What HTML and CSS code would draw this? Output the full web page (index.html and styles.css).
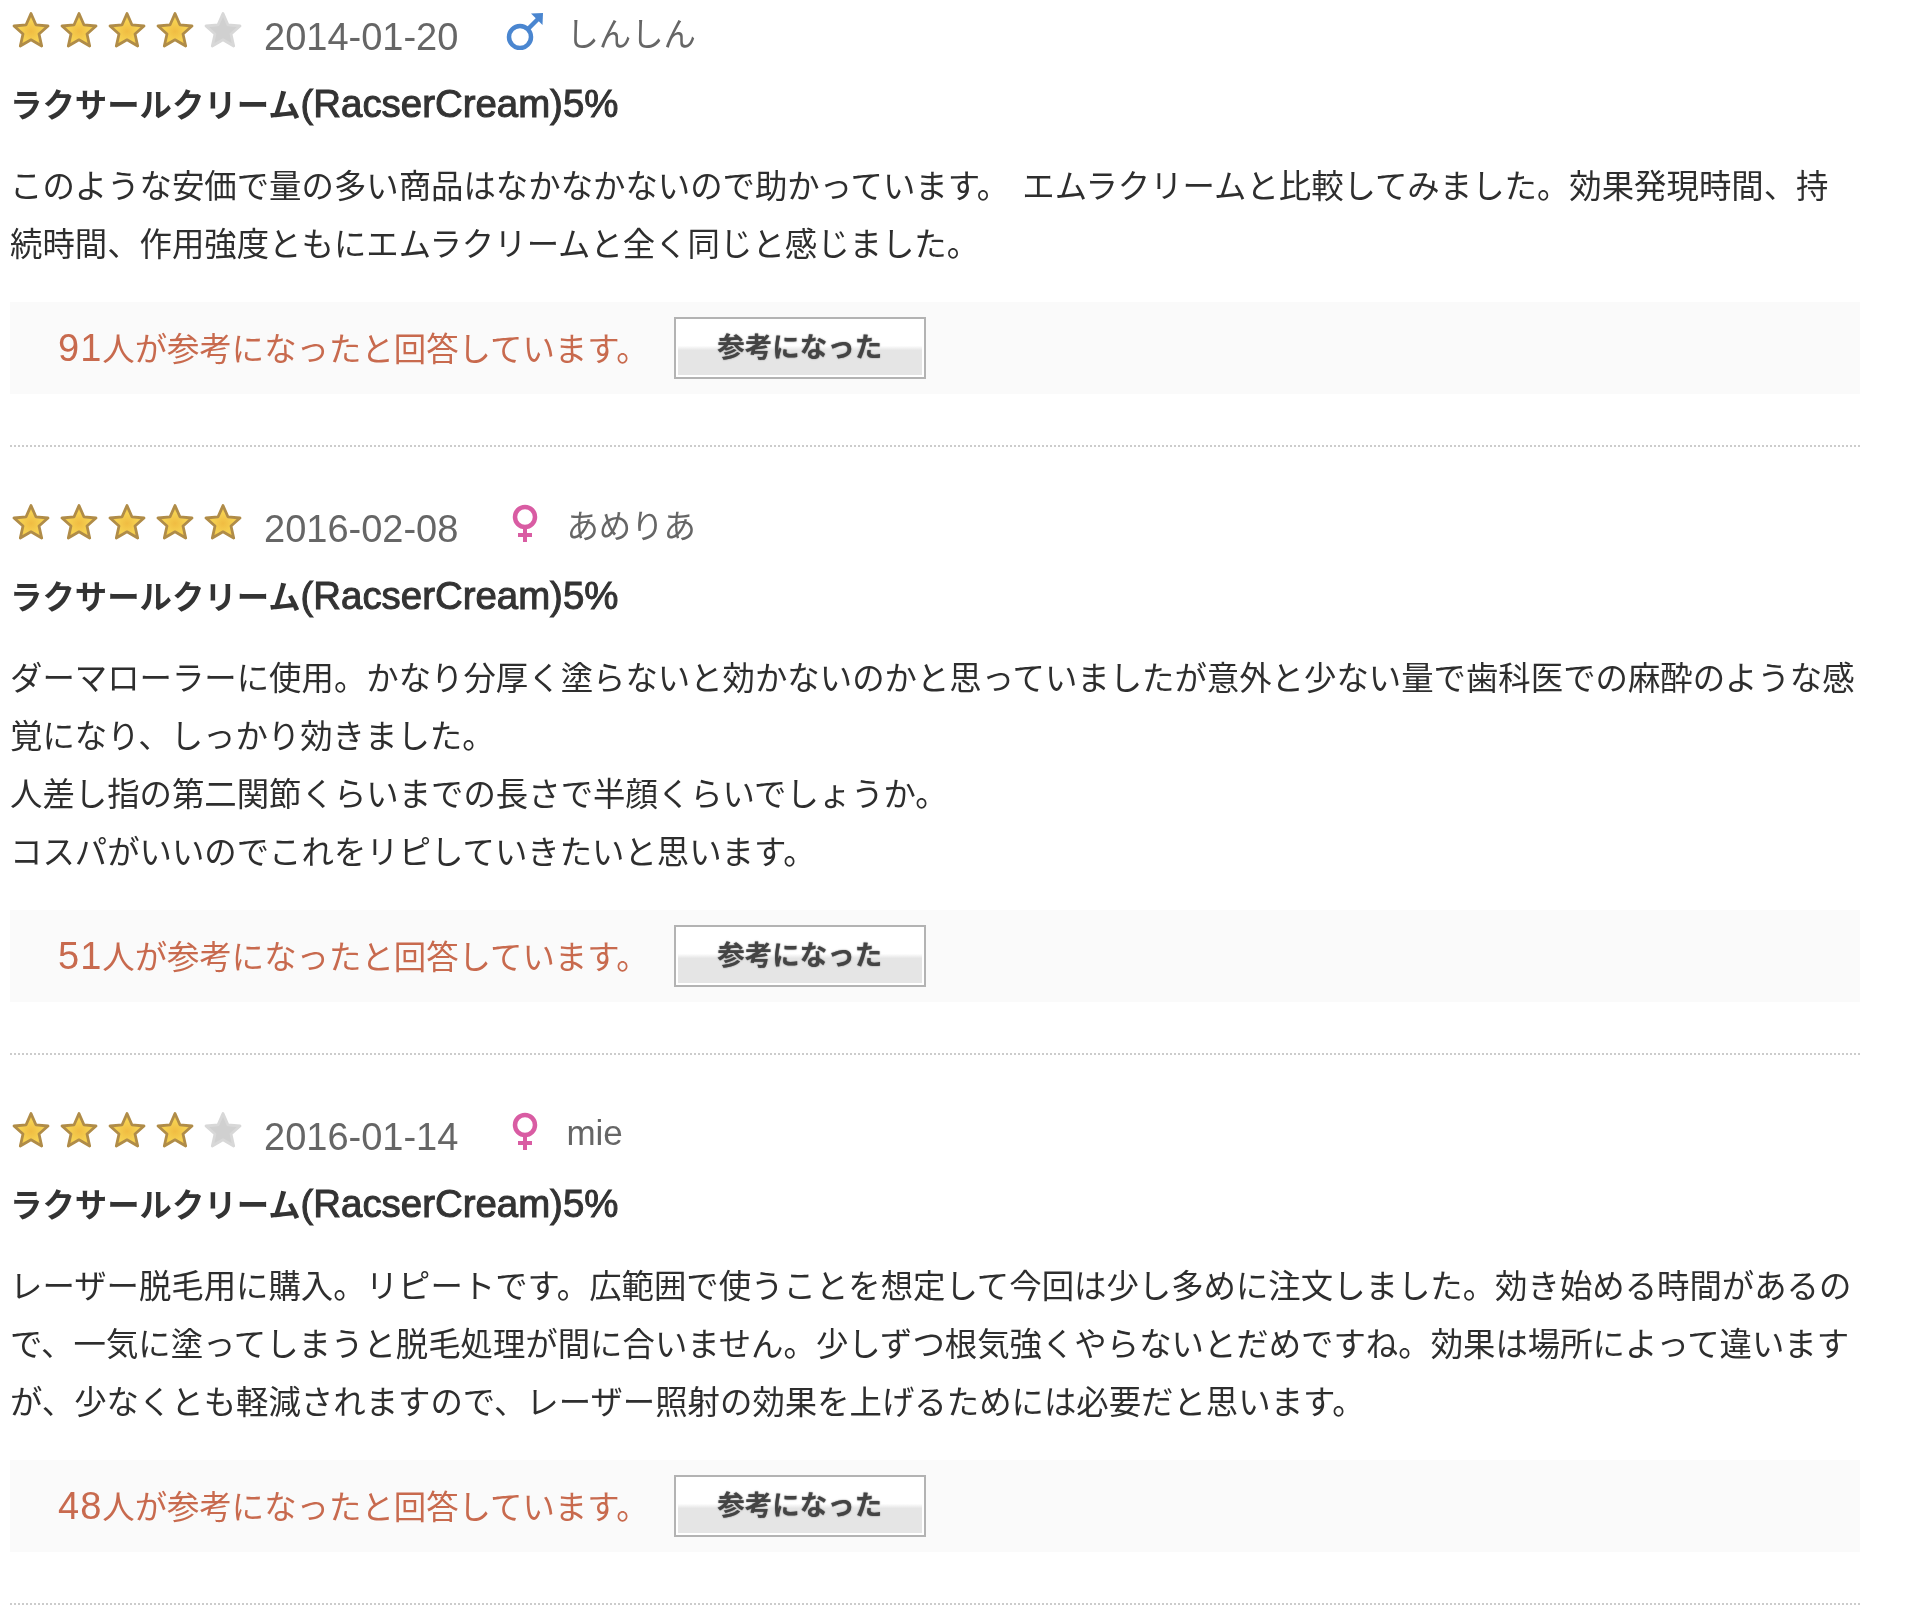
FILE: index.html
```html
<!DOCTYPE html>
<html lang="ja">
<head>
<meta charset="utf-8">
<title>レビュー</title>
<link rel="stylesheet" href="styles.css">
</head>
<body>
<svg class="defs" width="0" height="0" aria-hidden="true">
  <defs>
    <radialGradient id="gold" cx="0.5" cy="0.55" r="0.55">
      <stop offset="0" stop-color="#f0bc42"/>
      <stop offset="0.6" stop-color="#f6d252"/>
      <stop offset="1" stop-color="#efb53a"/>
    </radialGradient>
    <symbol id="star" viewBox="0 0 38 38">
      <path d="M19 2.500l4.900 11.300 12.100 1.200-9 8 2.700 12-10.700-6.200L8.300 35l2.700-12-9-8 12.100-1.200z" fill="url(#gold)" stroke="#b08c48" stroke-width="2.800" stroke-linejoin="round"/>
    </symbol>
    <symbol id="star-off" viewBox="0 0 38 38">
      <path d="M19 2.500l4.900 11.300 12.100 1.200-9 8 2.700 12-10.700-6.200L8.300 35l2.700-12-9-8 12.100-1.200z" fill="#d0d0d0" stroke="#d8d8d8" stroke-width="2.800" stroke-linejoin="round"/>
    </symbol>
    <symbol id="male" viewBox="0 0 40 40">
      <circle cx="15" cy="27" r="11" fill="none" stroke="#4a86d0" stroke-width="4.500"/>
      <path d="M23 19L33 9" fill="none" stroke="#4a86d0" stroke-width="4.500"/>
      <path d="M26 3.500L38 3l-.5 12z" fill="#4a86d0"/>
    </symbol>
    <symbol id="female" viewBox="0 -2 40 40">
      <circle cx="20" cy="13" r="10" fill="none" stroke="#d95ca3" stroke-width="4.500"/>
      <path d="M20 23v15M13 31h14" fill="none" stroke="#d95ca3" stroke-width="4"/>
    </symbol>
  </defs>
</svg>
<main class="reviews">
  <article class="review">
    <div class="meta">
      <span class="stars"><svg class="star"><use href="#star"/></svg><svg class="star"><use href="#star"/></svg><svg class="star"><use href="#star"/></svg><svg class="star"><use href="#star"/></svg><svg class="star"><use href="#star-off"/></svg></span>
      <span class="date">2014-01-20</span>
      <svg class="gender"><use href="#male"/></svg>
      <span class="name">しんしん</span>
    </div>
    <h2 class="title">ラクサールクリーム<span class="latin">(RacserCream)5%</span></h2>
    <p class="body">このような安価で量の多い商品はなかなかないので助かっています。 エムラクリームと比較してみました。効果発現時間、持続時間、作用強度ともにエムラクリームと全く同じと感じました。</p>
    <div class="helpful">
      <span class="count"><span class="digits">91</span>人が参考になったと回答しています。</span>
      <button class="vote" type="button">参考になった</button>
    </div>
  </article>
  <article class="review">
    <div class="meta">
      <span class="stars"><svg class="star"><use href="#star"/></svg><svg class="star"><use href="#star"/></svg><svg class="star"><use href="#star"/></svg><svg class="star"><use href="#star"/></svg><svg class="star"><use href="#star"/></svg></span>
      <span class="date">2016-02-08</span>
      <svg class="gender"><use href="#female"/></svg>
      <span class="name">あめりあ</span>
    </div>
    <h2 class="title">ラクサールクリーム<span class="latin">(RacserCream)5%</span></h2>
    <p class="body">ダーマローラーに使用。かなり分厚く塗らないと効かないのかと思っていましたが意外と少ない量で歯科医での麻酔のような感覚になり、しっかり効きました。<br>人差し指の第二関節くらいまでの長さで半顔くらいでしょうか。<br>コスパがいいのでこれをリピしていきたいと思います。</p>
    <div class="helpful">
      <span class="count"><span class="digits">51</span>人が参考になったと回答しています。</span>
      <button class="vote" type="button">参考になった</button>
    </div>
  </article>
  <article class="review">
    <div class="meta">
      <span class="stars"><svg class="star"><use href="#star"/></svg><svg class="star"><use href="#star"/></svg><svg class="star"><use href="#star"/></svg><svg class="star"><use href="#star"/></svg><svg class="star"><use href="#star-off"/></svg></span>
      <span class="date">2016-01-14</span>
      <svg class="gender"><use href="#female"/></svg>
      <span class="name name-latin">mie</span>
    </div>
    <h2 class="title">ラクサールクリーム<span class="latin">(RacserCream)5%</span></h2>
    <p class="body">レーザー脱毛用に購入。リピートです。広範囲で使うことを想定して今回は少し多めに注文しました。効き始める時間があるので、一気に塗ってしまうと脱毛処理が間に合いません。少しずつ根気強くやらないとだめですね。効果は場所によって違いますが、少なくとも軽減されますので、レーザー照射の効果を上げるためには必要だと思います。</p>
    <div class="helpful">
      <span class="count"><span class="digits">48</span>人が参考になったと回答しています。</span>
      <button class="vote" type="button">参考になった</button>
    </div>
  </article>
</main>
</body>
</html>
```

FILE: styles.css
```css
* { box-sizing: border-box; }
html, body { margin: 0; padding: 0; background: #fff; }
body {
  font-family: "Liberation Sans", "Noto Sans CJK JP", sans-serif;
  color: #333;
  font-size: 32.4px;
}
.defs { position: absolute; }
.reviews { width: 1860px; padding-left: 10px; filter: blur(0.4px); }
.review {
  border-bottom: 2px dotted #ccc;
  padding-bottom: 51px;
  margin-bottom: 45px;
}
.meta {
  display: flex;
  align-items: center;
  height: 60px;
}
.stars { display: flex; gap: 10px; margin: 0 22px 0 2px; }
.star { width: 38px; height: 38px; display: block; }
.date { font-size: 38px; color: #666; margin-right: 47px; margin-top: 14px; }
.gender { width: 40px; height: 40px; display: block; margin-right: 21px; }
.name { color: #666; font-weight: 400; margin-top: 3px; }
.name-latin { font-size: 35px; margin-top: 5px; }
.title {
  margin: 14px 0 0;
  font-size: 32.4px;
  line-height: 60px;
  font-weight: 700;
  color: #333;
}
.latin {
  font-size: 38.4px;
  font-weight: 400;
  -webkit-text-stroke: 1px #333;
}
.body {
  margin: 22px 0 28px;
  line-height: 58px;
  font-weight: 400;
  word-spacing: 4px;
  color: #2e2e2e;
}
.helpful {
  display: flex;
  align-items: center;
  height: 92px;
  background: #fafafa;
  padding-left: 48px;
}
.count { color: #c86a4e; margin: -3px 25px 0 0; }
.digits { font-size: 38px; letter-spacing: 1px; }
.vote {
  width: 252px;
  height: 62px;
  border: 2px solid #b3b3b3;
  background: linear-gradient(#fff 0, #fff 46%, #e5e5e5 54%, #e5e5e5 100%);
  box-shadow: inset 0 0 0 2px #fff;
  font: 700 27.500px "Noto Sans CJK JP", sans-serif;
  color: #444;
  text-shadow: 0 0 1.500px #666;
  padding: 0 0 6px;
}
```
